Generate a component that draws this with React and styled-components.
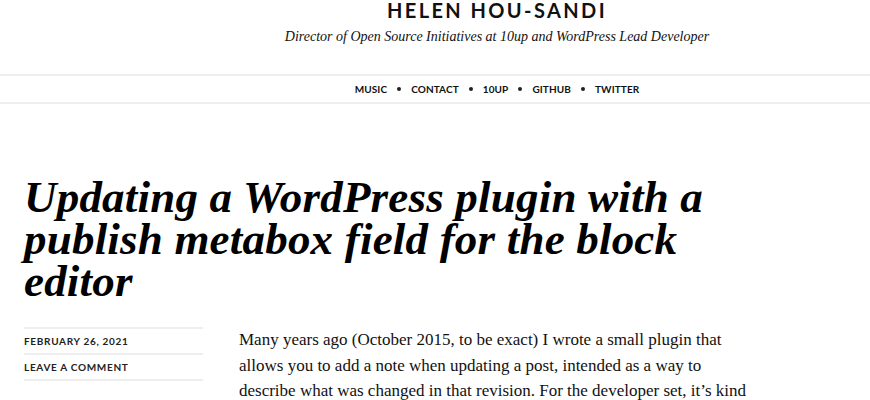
import * as React from 'react';
import styled, { createGlobalStyle } from 'styled-components';

const GlobalStyle = createGlobalStyle`
    html, body {
        margin: 0;
        padding: 0;
        background: #fff;
        color: #111;
    }
`;

const navItems = ['Music', 'Contact', '10up', 'GitHub', 'Twitter'];

export default function App() {
    return (
        <Page>
            <GlobalStyle />
            <Masthead>
                <SiteTitle>Helen Hou-Sandi</SiteTitle>
                <Tagline>Director of Open Source Initiatives at 10up and WordPress Lead Developer</Tagline>
            </Masthead>
            <NavBar>
                {navItems.map((item, i) => (
                    <React.Fragment key={item}>
                        {i > 0 && <Bullet />}
                        <NavLink>{item}</NavLink>
                    </React.Fragment>
                ))}
            </NavBar>
            <Article>
                <PostTitle>Updating a WordPress plugin with a publish metabox field for the block editor</PostTitle>
                <PostBody>
                    <Meta>
                        <MetaItem>February 26, 2021</MetaItem>
                        <MetaItem>Leave a comment</MetaItem>
                    </Meta>
                    <Entry>
                        <p>
                            Many years ago (October 2015, to be exact) I wrote a small plugin that<br />
                            allows you to add a note when updating a post, intended as a way to<br />
                            describe what was changed in that revision. For the developer set, it’s kind
                        </p>
                    </Entry>
                </PostBody>
            </Article>
        </Page>
    );
}

const Page = styled.div`
    width: 870px;
    overflow: hidden;
`;

// the header is centred on a wider page than the visible frame
const Masthead = styled.header`
    padding-left: 124px;
    text-align: center;
`;

const SiteTitle = styled.h1`
    margin: 0;
    font-family: Lato, "Liberation Sans", sans-serif;
    font-weight: 700;
    font-size: 20px;
    line-height: 20px;
    letter-spacing: 2.4px;
    text-transform: uppercase;
    color: #111;
`;

const Tagline = styled.p`
    margin: 8px 0 0;
    font-family: "Liberation Serif", serif;
    font-style: italic;
    font-size: 14px;
    line-height: 18px;
    color: #111;
`;

const NavBar = styled.nav`
    margin-top: 28px;
    padding: 0 0 1px 124px;
    height: 25px;
    border-top: 2px solid #eee;
    border-bottom: 2px solid #eee;
    display: flex;
    align-items: center;
    justify-content: center;
    gap: 10px;
`;

const NavLink = styled.span`
    font-family: Lato, "Liberation Sans", sans-serif;
    font-weight: 700;
    font-size: 10px;
    letter-spacing: 0.1px;
    text-transform: uppercase;
    color: #111;
`;

const Bullet = styled.span`
    width: 4px;
    height: 4px;
    border-radius: 50%;
    background: #222;
`;

const Article = styled.main`
    padding: 0 24px;
`;

const PostTitle = styled.h2`
    margin: 72px 0 0;
    max-width: 720px;
    font-family: "Liberation Serif", serif;
    font-weight: 700;
    font-style: italic;
    font-size: 45px;
    line-height: 42px;
    letter-spacing: 0.2px;
    color: #000;
`;

const PostBody = styled.div`
    margin-top: 25px;
    display: flex;
    gap: 36px;
    align-items: flex-start;
`;

const Meta = styled.ul`
    margin: 0;
    padding: 0;
    list-style: none;
    width: 179px;
    flex-shrink: 0;
    border-bottom: 2px solid #eee;
`;

const MetaItem = styled.li`
    height: 24px;
    display: flex;
    align-items: center;
    border-top: 2px solid #eee;
    font-family: Lato, "Liberation Sans", sans-serif;
    font-weight: 700;
    font-size: 10px;
    letter-spacing: 0.7px;
    text-transform: uppercase;
    color: #222;
`;

const Entry = styled.div`
    font-family: "Liberation Serif", serif;
    font-size: 17px;
    line-height: 25.5px;
    color: #111;
    white-space: nowrap;

    p {
        margin: 0;
    }
`;
